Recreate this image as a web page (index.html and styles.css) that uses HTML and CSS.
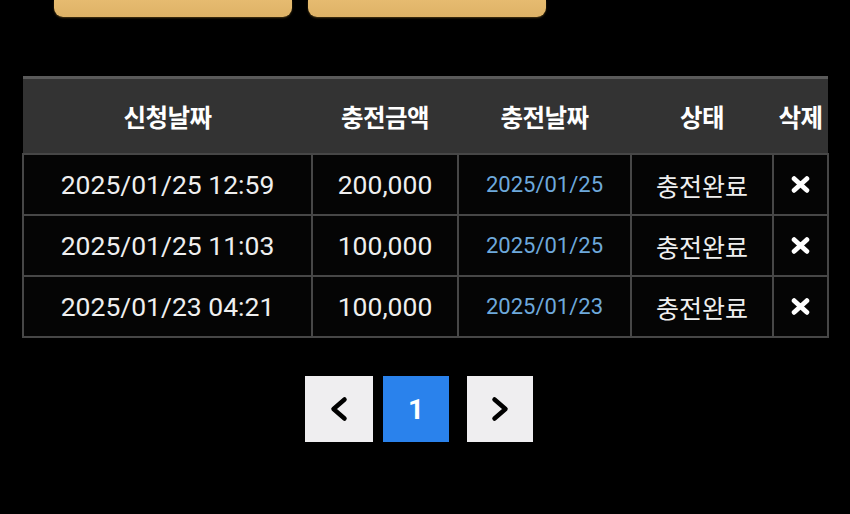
FILE: index.html
```html
<!DOCTYPE html>
<html lang="ko">
<head>
<meta charset="utf-8">
<link rel="stylesheet" href="styles.css">
</head>
<body>
<div class="top-buttons">
  <div class="gold-btn"></div>
  <div class="gold-btn"></div>
</div>
<table class="history">
  <colgroup>
    <col class="c1"><col class="c2"><col class="c3"><col class="c4"><col class="c5">
  </colgroup>
  <thead>
    <tr><th>신청날짜</th><th>충전금액</th><th>충전날짜</th><th>상태</th><th>삭제</th></tr>
  </thead>
  <tbody>
    <tr><td>2025/01/25 12:59</td><td>200,000</td><td class="blue">2025/01/25</td><td class="ko">충전완료</td><td><svg class="x" viewBox="0 0 18 16"><path d="M3 2.5 L15 13.5 M15 2.5 L3 13.5"/></svg></td></tr>
    <tr><td>2025/01/25 11:03</td><td>100,000</td><td class="blue">2025/01/25</td><td class="ko">충전완료</td><td><svg class="x" viewBox="0 0 18 16"><path d="M3 2.5 L15 13.5 M15 2.5 L3 13.5"/></svg></td></tr>
    <tr><td>2025/01/23 04:21</td><td>100,000</td><td class="blue">2025/01/23</td><td class="ko">충전완료</td><td><svg class="x" viewBox="0 0 18 16"><path d="M3 2.5 L15 13.5 M15 2.5 L3 13.5"/></svg></td></tr>
  </tbody>
</table>
<div class="pager">
  <div class="pg pg-prev"><svg viewBox="0 0 20 28"><path d="M15.5 4.5 L4.5 14 L15.5 23.5"/></svg></div>
  <div class="pg pg-cur">1</div>
  <div class="pg pg-next"><svg viewBox="0 0 20 28"><path d="M4.5 4.5 L15.5 14 L4.5 23.5"/></svg></div>
</div>
</body>
</html>
```
FILE: styles.css
```css
html, body {
  margin: 0;
  padding: 0;
  background: #000;
  width: 850px;
  height: 514px;
  overflow: hidden;
  font-family: Roboto, "Noto Sans CJK KR", sans-serif;
  color: #eeeeee;
}
.top-buttons {
  display: flex;
  gap: 16px;
  padding-left: 54px;
  height: 17px;
}
.gold-btn {
  width: 238px;
  height: 17px;
  background: linear-gradient(#e6bb70, #deb266);
  border-radius: 0 0 9px 9px;
  box-shadow: 0 1px 2px rgba(120, 90, 30, 0.6);
}
.history {
  margin: 59px 0 0 22px;
  width: 805px;
  border-collapse: collapse;
  table-layout: fixed;
}
.c1 { width: 289px; }
.c2 { width: 146px; }
.c3 { width: 173px; }
.c4 { width: 142px; }
.c5 { width: 55px; }
.history thead tr {
  background: #333333;
  border-top: 3px solid #5a5a5a;
  border-bottom: 2px solid #141414;
}
.history th {
  height: 74px;
  padding: 0;
  font-family: "Noto Sans CJK KR", sans-serif;
  font-weight: 700;
  font-size: 24.5px;
  letter-spacing: -0.5px;
  color: #ffffff;
  text-align: center;
  vertical-align: middle;
}
.history td {
  height: 59px;
  padding: 0;
  border: 2px solid #474747;
  background: #050505;
  text-align: center;
  vertical-align: middle;
  font-size: 26.5px;
  color: #efefef;
  white-space: nowrap;
}
.history td.blue {
  font-size: 22px;
  color: #6ea9dc;
}
.history td.ko {
  font-family: "Noto Sans CJK KR", sans-serif;
  font-size: 25px;
}
.x {
  width: 19px;
  height: 17px;
  display: block;
  margin: 0 auto;
}
.x path {
  stroke: #ffffff;
  stroke-width: 4.6;
  stroke-linecap: round;
  fill: none;
}
.pager {
  display: flex;
  justify-content: center;
  padding-right: 12px;
  margin-top: 38px;
}
.pg {
  width: 66px;
  height: 66px;
  background: #efeef0;
  display: flex;
  align-items: center;
  justify-content: center;
}
.pg-prev { width: 68px; margin-right: 10px; }
.pg-next { margin-left: 18px; }
.pg-cur {
  background: #2a82ec;
  color: #ffffff;
  font-family: Roboto, sans-serif;
  font-weight: 700;
  font-size: 28px;
}
.pg svg {
  width: 20px;
  height: 28px;
}
.pg svg path {
  stroke: #000;
  stroke-width: 4.5;
  stroke-linecap: round;
  stroke-linejoin: round;
  fill: none;
}
```
